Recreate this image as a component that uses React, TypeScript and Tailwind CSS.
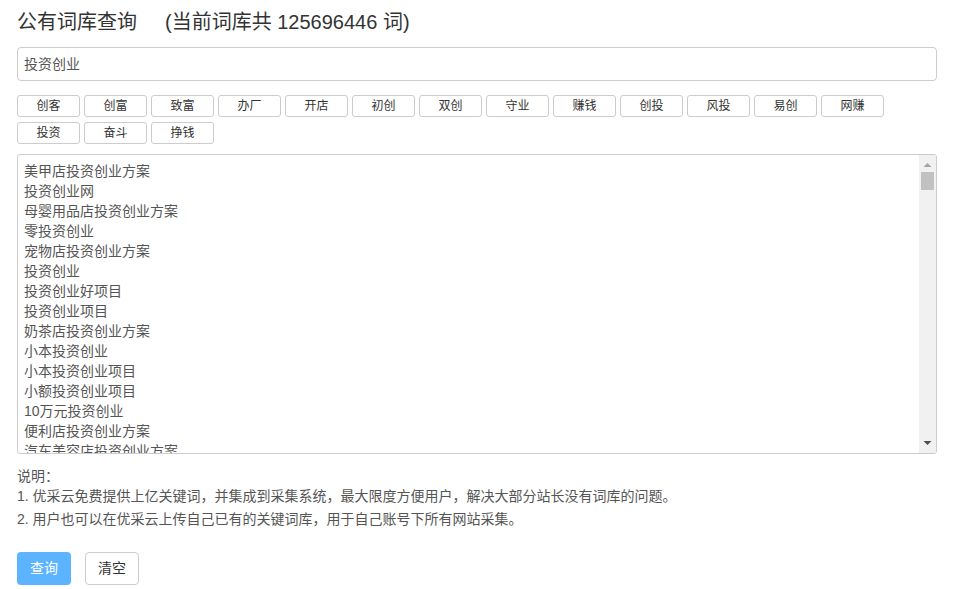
const tags = [
  '创客', '创富', '致富', '办厂', '开店', '初创', '双创', '守业', '赚钱', '创投', '风投', '易创', '网赚',
  '投资', '奋斗', '挣钱',
];

const words = [
  '美甲店投资创业方案',
  '投资创业网',
  '母婴用品店投资创业方案',
  '零投资创业',
  '宠物店投资创业方案',
  '投资创业',
  '投资创业好项目',
  '投资创业项目',
  '奶茶店投资创业方案',
  '小本投资创业',
  '小本投资创业项目',
  '小额投资创业项目',
  '10万元投资创业',
  '便利店投资创业方案',
  '汽车美容店投资创业方案',
];

const font = { fontFamily: '"Liberation Sans", "Noto Sans CJK SC", sans-serif' };

export default function App() {
  return (
    <div className="w-[954px] h-[589px] bg-white px-[17px] pt-[8px] text-[#333]" style={font}>
      <h1 className="text-[20px] leading-[28px] font-normal text-[#333]">
        公有词库查询<span className="ml-[28px]">(当前词库共 125696446 词)</span>
      </h1>

      <div className="mt-[11px] h-[34px] border border-[#ccc] rounded-[4px] flex items-center px-[6px] text-[14px] text-[#555]">
        投资创业
      </div>

      <div className="mt-[14px] flex flex-wrap gap-x-[4px] gap-y-[5px]">
        {tags.map((t) => (
          <button
            key={t}
            className="w-[63px] h-[22px] border border-[#ccc] rounded-[3px] bg-white text-[12px] leading-[20px] text-[#333]"
          >
            {t}
          </button>
        ))}
      </div>

      <div className="mt-[10px] h-[300px] border border-[#ccc] rounded-[3px] flex overflow-hidden">
        <div className="flex-1 pl-[6px] pt-[6px] text-[14px] leading-[20px] text-[#555] overflow-hidden">
          {words.map((w, i) => (
            <div key={i}>{w}</div>
          ))}
        </div>
        <div className="w-[17px] bg-[#f1f1f1] flex flex-col items-center">
          <svg width="9" height="6" viewBox="0 0 9 6" className="mt-[7px]">
            <path d="M0.5 5 L4.5 1 L8.5 5 Z" fill="#a3a3a3" />
          </svg>
          <div className="mt-[4px] w-[13px] h-[18px] bg-[#c1c1c1]" />
          <div className="flex-1" />
          <svg width="9" height="6" viewBox="0 0 9 6" className="mb-[7px]">
            <path d="M0.5 1 L4.5 5 L8.5 1 Z" fill="#505050" />
          </svg>
        </div>
      </div>

      <div className="mt-[12px] text-[14px] text-[#555]">
        <p className="leading-[20px]">说明：</p>
        <p className="leading-[21px]">1. 优采云免费提供上亿关键词，并集成到采集系统，最大限度方便用户，解决大部分站长没有词库的问题。</p>
        <p className="leading-[24px]">2. 用户也可以在优采云上传自己已有的关键词库，用于自己账号下所有网站采集。</p>
      </div>

      <div className="mt-[21px] flex gap-[14px]">
        <button className="w-[54px] h-[33px] rounded-[4px] bg-[#5cb3ff] text-white text-[14px]">查询</button>
        <button className="w-[54px] h-[33px] rounded-[4px] border border-[#ccc] bg-white text-[#333] text-[14px]">清空</button>
      </div>
    </div>
  );
}
